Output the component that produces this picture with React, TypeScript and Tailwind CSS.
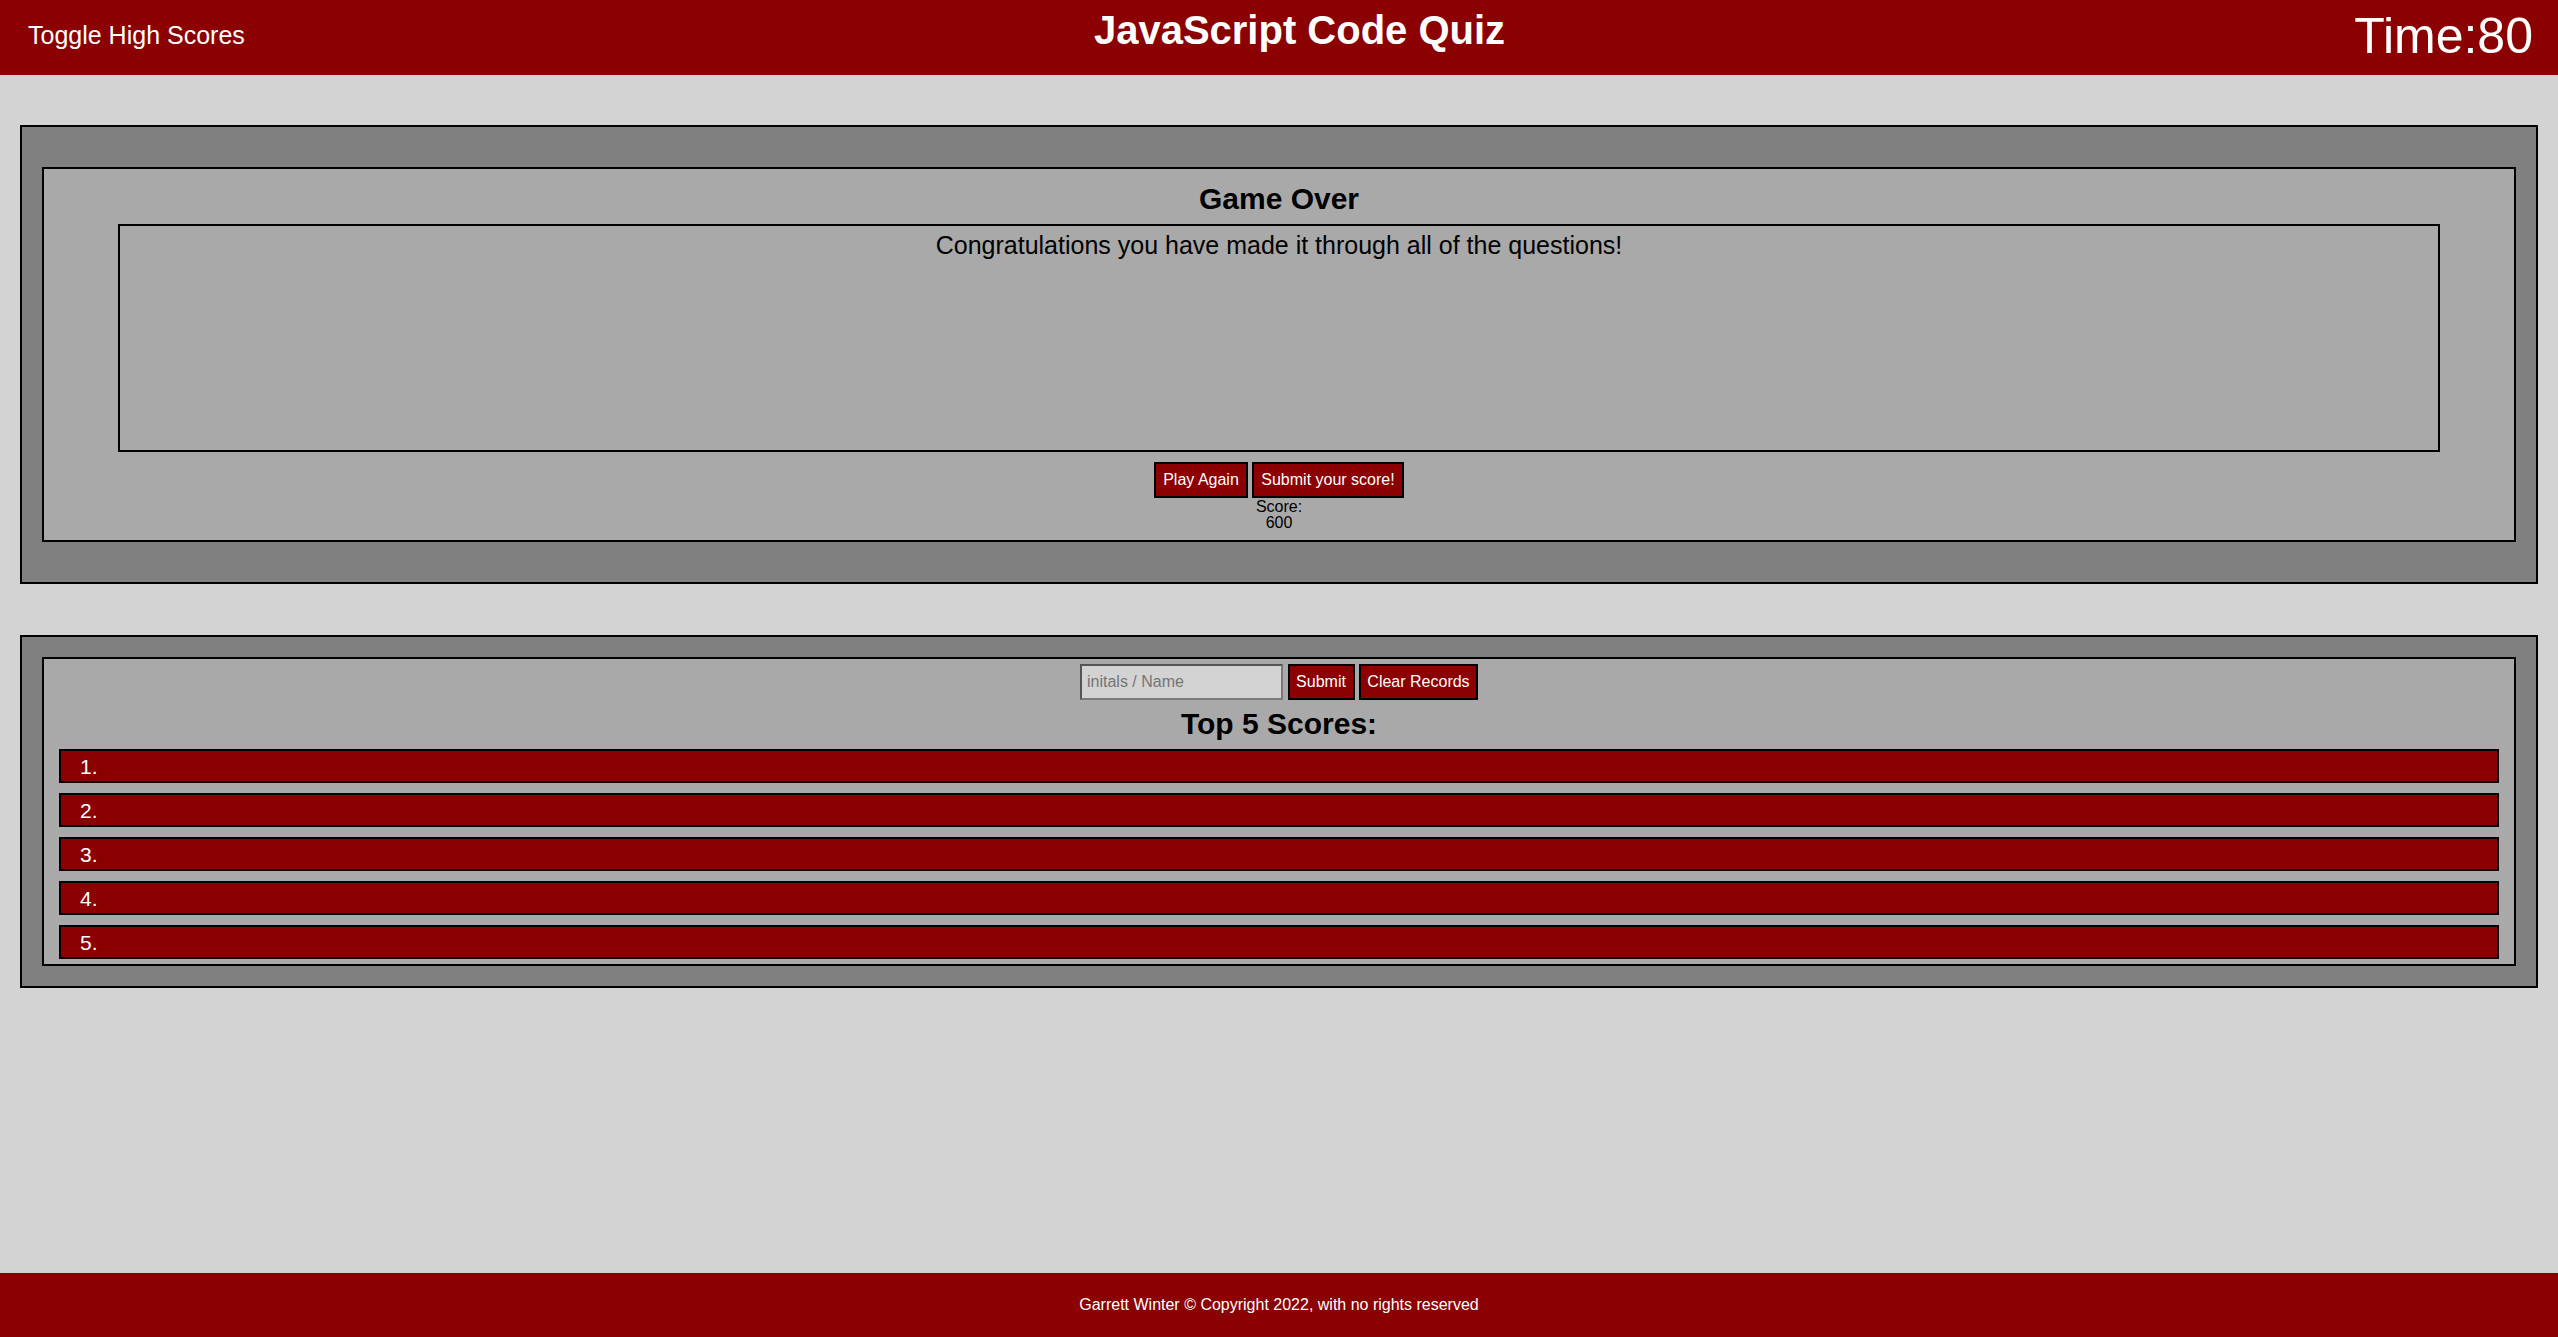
import React from "react";

const btn =
  "h-[36px] border-2 border-black bg-[#8b0000] text-white text-[16px] leading-none flex items-center justify-center";

export default function App() {
  return (
    <div className="min-h-screen flex flex-col bg-[#d3d3d3] font-['Liberation_Sans',Arial,sans-serif] text-black">
      <header className="h-[75px] bg-[#8b0000] text-white flex justify-between items-start">
        <div className="pl-[28px] pt-[23px] text-[25px] leading-none">Toggle High Scores</div>
        <h1 className="pt-[10px] text-[40px] leading-none font-bold">JavaScript Code Quiz</h1>
        <div className="pr-[25px] pt-[11px] text-[50px] leading-none">Time:80</div>
      </header>

      <main className="flex-1 flex flex-col px-[20px] pt-[50px]">
        <section className="border-2 border-black bg-[#808080] px-[20px] py-[40px]">
          <div className="border-2 border-black bg-[#a9a9a9] flex flex-col items-stretch pb-[9px]">
            <h2 className="mt-[15px] text-center text-[30px] leading-none font-bold">Game Over</h2>
            <div className="mt-[10px] mx-[74px] h-[228px] border-2 border-black pt-[7px] text-center text-[25px] leading-none">
              Congratulations you have made it through all of the questions!
            </div>
            <div className="mt-[10px] flex justify-center gap-[4px]">
              <button className={`${btn} w-[94px]`}>Play Again</button>
              <button className={`${btn} w-[152px]`}>Submit your score!</button>
            </div>
            <div className="pt-[1px] text-center text-[16px] leading-[16px]">
              <div>Score:</div>
              <div>600</div>
            </div>
          </div>
        </section>

        <section className="mt-[51px] border-2 border-black bg-[#808080] p-[20px]">
          <div className="border-2 border-black bg-[#a9a9a9] flex flex-col pt-[5px] pb-[5px]">
            <div className="flex justify-center gap-[4.5px]">
              <input
                placeholder="initals / Name"
                className="w-[203px] h-[36px] bg-[#d3d3d3] border-2 border-t-[#555555] border-l-[#555555] border-b-[#7a7a7a] border-r-[#7a7a7a] px-[5px] text-[16px] placeholder:text-[#757575] outline-none"
              />
              <button className={`${btn} w-[67px]`}>Submit</button>
              <button className={`${btn} w-[119px]`}>Clear Records</button>
            </div>
            <h2 className="mt-[9px] text-center text-[30px] leading-none font-bold">Top 5 Scores:</h2>
            <ol className="mt-[10px] mx-[15px] flex flex-col gap-[10px]">
              {[1, 2, 3, 4, 5].map((n) => (
                <li
                  key={n}
                  className="h-[34px] border-2 border-black bg-[#8b0000] text-white text-[21px] leading-none flex items-center pl-[19px]"
                >
                  {n}.
                </li>
              ))}
            </ol>
          </div>
        </section>
      </main>

      <footer className="h-[64px] bg-[#8b0000] text-white text-[16px] flex items-center justify-center">
        Garrett Winter © Copyright 2022, with no rights reserved
      </footer>
    </div>
  );
}
